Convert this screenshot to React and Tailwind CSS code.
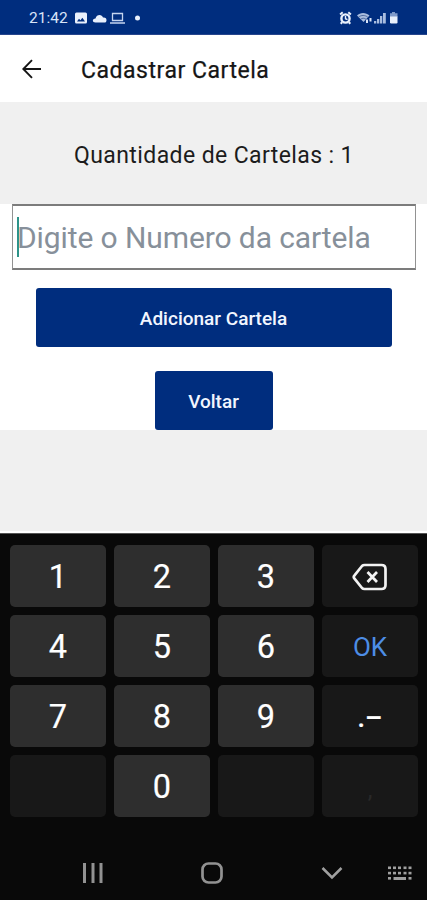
import React from "react";

function StatusBar() {
  return (
    <div className="flex h-[35px] shrink-0 items-center border-b border-[#27458c] bg-[#002d7e] pl-[29px] pr-[27px] pt-px text-[#d9e4f8]">
      <span className="w-[46px] whitespace-nowrap pt-[2px] text-[15.500px] leading-none">21:42</span>
      <svg className="h-[14px] w-[70px]" viewBox="0 0 70 14" fill="none">
        <path fill="#e9f0fc" fillRule="evenodd" d="M1.500 1.500h9q1.500 0 1.500 1.500v8q0 1.500-1.500 1.500h-9Q0 12.500 0 11V3q0-1.500 1.500-1.500ZM2 10.500h8L7.400 6.700 5.400 9.200 4 7.700Z" />
        <path fill="#e9f0fc" d="M20.500 11.500c-3.500 0-3.500-4 0-4 1-4.500 6.500-4.500 7.500-1 3 0 3.500 1.300 3.500 2.700 0 1.600-.8 2.300-2 2.300Z" />
        <path stroke="#c5d4ef" strokeWidth="1.300" d="M37.500 2.500h10v7h-10zM35 12h15" />
        <circle cx="62.500" cy="7" r="2.500" fill="#e9f0fc" />
      </svg>
      <svg className="ml-auto h-[14px] w-[61px]" viewBox="0 0 61 14" fill="none">
        <circle cx="6.500" cy="7.500" r="4.100" stroke="#e9f0fc" strokeWidth="2.400" />
        <path stroke="#e9f0fc" strokeWidth="2" d="M1.100 3.500 3.700 1.300M9.300 1.300l2.600 2.200M3.200 11.200l-1.500 1.500M9.800 11.200l1.500 1.500" />
        <path stroke="#e9f0fc" strokeWidth="1.400" d="M6.500 5v2.700l2 1" />
        <path fill="#a9bddf" d="M18 4.500C21 1 27 1 30.500 4.500L24.500 11Z" />
        <path stroke="#38578f" strokeWidth=".8" d="M19.500 6.200c2.500-2.300 6.800-2.300 9.300 0M21.500 8.300c1.500-1.400 4-1.400 5.500 0" />
        <path stroke="#d9e4f8" strokeWidth="2" d="M28 12V8.500M31.500 10.500V7" />
        <path fill="#a9bddf" d="M35 10h2.300v2.500H35zM38 8h2.300v4.500H38z" />
        <path fill="#a9bddf" d="M41 5h2.300v7.500H41zM44 2h2.800v10.500H44z" />
        <path fill="#7f9aca" d="M53 1h3v1.300h2.500V6H51V2.300h2z" />
        <path fill="#e9f0fc" d="M51 5.500h7.500v5.800q0 1.200-1.200 1.200h-5.100q-1.200 0-1.200-1.200Z" />
      </svg>
    </div>
  );
}

function Header() {
  return (
    <header className="flex h-[67px] shrink-0 items-center bg-white pl-[22px] text-[#151515]">
      <svg className="h-[20px] w-[20px]" viewBox="0 0 20 20" fill="none" stroke="currentColor" strokeWidth="1.900">
        <path d="M19 10H1.500M10 1.200 1.300 10l8.700 8.800" />
      </svg>
      <h1 className="ml-[39px] whitespace-nowrap pt-[3px] text-[23px] font-normal leading-none tracking-[0.530px] [-webkit-text-stroke:0.25px_#151515]">Cadastrar Cartela</h1>
    </header>
  );
}

function Backspace() {
  return (
    <svg className="h-[28px] w-[36px]" viewBox="0 0 36 28" fill="none" stroke="#f2f2f2" strokeWidth="2.700" strokeLinejoin="round">
      <path d="M12.500 2H29.500q4 0 4 4v16q0 4-4 4H12.500q-1.500 0-2.500-1L2.500 15.700q-1.500-1.700 0-3.400L10 3q1-1 2.500-1Z" />
      <path d="m15.500 9 9.500 10m0-10-9.500 10" />
    </svg>
  );
}

const keys = [
  { label: "1" }, { label: "2" }, { label: "3" }, { icon: "backspace", dark: true },
  { label: "4" }, { label: "5" }, { label: "6" }, { label: "OK", dark: true, style: "pt-[2px] text-[26px] text-[#4d8de5]" },
  { label: "7" }, { label: "8" }, { label: "9" }, { icon: "punctuation", dark: true },
  { label: "", dark: true }, { label: "0" }, { label: "", dark: true },
  { label: ",", dark: true, style: "pt-2 text-[24px] text-[#292929]" },
];

function Key({ item }) {
  return (
    <div className={`flex items-center justify-center rounded-[5px] leading-none ${item.dark ? "bg-[#181818]" : "bg-[#2e2e2e]"} ${item.style || "pt-[2px] text-[32.500px] text-white [-webkit-text-stroke:0.2px_white]"}`}>
      {item.icon === "backspace" && <Backspace />}
      {item.icon === "punctuation" && <span className="whitespace-nowrap pt-[2px] text-[27px] font-medium leading-none">.–</span>}
      {item.label}
    </div>
  );
}

function Keyboard() {
  return (
    <section className="flex h-[367px] shrink-0 flex-col border-t border-[#555] bg-[#090909]">
      <div className="ml-[10px] mt-[11px] grid h-[272px] w-[408px] grid-cols-4 grid-rows-4 gap-2">
        {keys.map((item, index) => <Key key={index} item={item} />)}
      </div>
      <nav className="mt-[44px] flex h-[24px] items-center pl-[82px]">
        <svg className="h-[22px] w-[22px]" viewBox="0 0 22 22" stroke="#929292" strokeWidth="3">
          <path d="M2.500 1v20M11 1v20M19 1v20" />
        </svg>
        <svg className="ml-[96px] h-[24px] w-[24px]" viewBox="0 0 24 24" fill="none" stroke="#929292" strokeWidth="2.700">
          <rect x="2.500" y="2.500" width="19" height="19" rx="6" />
        </svg>
        <svg className="ml-[97px] h-[14px] w-[22px]" viewBox="0 0 22 14" fill="none" stroke="#a0a0a0" strokeWidth="2.500">
          <path d="m1.500 2 9.500 9.500L20.500 2" />
        </svg>
        <svg className="ml-[44px] h-[16px] w-[26px]" viewBox="0 0 26 16" fill="#a0a0a0">
          {[1, 6, 11, 16.5, 21.5].map((x) => (
            <React.Fragment key={x}>
              <rect x={x} y="1.500" width="3" height="2.600" />
              <rect x={x} y="6.800" width="3" height="2.600" />
            </React.Fragment>
          ))}
          <rect x="1" y="12" width="3" height="2.600" />
          <rect x="6.500" y="12" width="12.500" height="3" />
          <rect x="21.500" y="12" width="3" height="2.600" />
        </svg>
      </nav>
    </section>
  );
}

export default function App() {
  return (
    <div className="flex h-[900px] w-[427px] flex-col overflow-hidden bg-[#f0f0f0] font-['Roboto',sans-serif]">
      <StatusBar />
      <Header />
      <div className="flex h-[102px] shrink-0 items-center justify-center pl-px pt-[4px]">
        <p className="whitespace-nowrap text-[23px] leading-none tracking-[0.400px] text-[#1c1c1c]">Quantidade de Cartelas : 1</p>
      </div>
      <main className="flex h-[226px] shrink-0 flex-col items-center bg-white">
        <div className="ml-px flex h-[66px] w-[404px] shrink-0 items-center border-x border-y-2 border-x-[#929292] border-y-[#7c7c7c] pl-[4px]">
          <span className="h-[40px] w-[2px] bg-[#2d9389]" />
          <span className="-ml-[2px] whitespace-nowrap pt-px text-[30px] leading-none tracking-[-0.100px] text-[#87909a]">Digite o Numero da cartela</span>
        </div>
        <button className="mt-[18px] h-[59px] w-[356px] shrink-0 rounded-[3px] bg-[#002d7e] pt-px text-[19px] font-medium leading-none text-[#f2f6ff]">Adicionar Cartela</button>
        <button className="mt-[24px] h-[59px] w-[118px] shrink-0 rounded-[3px] bg-[#002d7e] pt-px text-[19px] font-medium leading-none text-[#f2f6ff]">Voltar</button>
      </main>
      <div className="h-[103px] shrink-0 border-b-2 border-white" />
      <Keyboard />
    </div>
  );
}
